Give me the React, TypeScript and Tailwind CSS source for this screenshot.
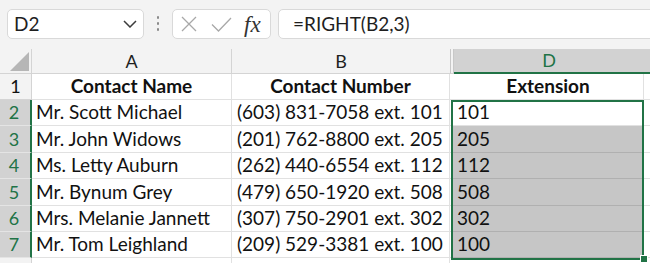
import React from "react";

const rows = [
  { n: 2, name: "Mr. Scott Michael", phone: "(603) 831-7058 ext. 101", ext: "101", h: "h-[26px]" },
  { n: 3, name: "Mr. John Widows", phone: "(201) 762-8800 ext. 205", ext: "205", h: "h-[27px]" },
  { n: 4, name: "Ms. Letty Auburn", phone: "(262) 440-6554 ext. 112", ext: "112", h: "h-[26px]" },
  { n: 5, name: "Mr. Bynum Grey", phone: "(479) 650-1920 ext. 508", ext: "508", h: "h-[27px]" },
  { n: 6, name: "Mrs. Melanie Jannett", phone: "(307) 750-2901 ext. 302", ext: "302", h: "h-[26px]" },
  { n: 7, name: "Mr. Tom Leighland", phone: "(209) 529-3381 ext. 100", ext: "100", h: "h-[26px]" },
];

const FormulaBar = () => (
  <div className="flex h-[49px] pt-[9px] pl-[7px]">
    <div className="flex h-[30px] w-[137px] items-center justify-between rounded-[5px] border border-[#d9d9d9] bg-white pl-[6px] pr-[6px]">
      <span className="text-[19px] text-[#1f1f1f]">D2</span>
      <svg width="14" height="8" viewBox="0 0 14 8" fill="none">
        <path d="M1 1l6 6 6-6" stroke="#3c3c3c" strokeWidth="1.5" />
      </svg>
    </div>
    <div className="flex w-[28px] flex-col items-center gap-[3.5px] pt-[7px]">
      <span className="h-[2.5px] w-[2.5px] rounded-full bg-[#8a8a8a]" />
      <span className="h-[2.5px] w-[2.5px] rounded-full bg-[#8a8a8a]" />
      <span className="h-[2.5px] w-[2.5px] rounded-full bg-[#8a8a8a]" />
    </div>
    <div className="flex h-[30px] w-[99px] items-center rounded-[5px] border border-[#d9d9d9] bg-white pl-[8px]">
      <svg width="16" height="16" viewBox="0 0 16 16" fill="none">
        <path d="M1 1l14 14M15 1L1 15" stroke="#a8a8a8" strokeWidth="1.3" />
      </svg>
      <svg className="ml-[14px]" width="21" height="15" viewBox="0 0 21 15" fill="none">
        <path d="M1 7.5l6.5 6.5L20 1" stroke="#a8a8a8" strokeWidth="1.3" />
      </svg>
      <span className="ml-[12px] font-['Liberation_Serif',serif] text-[23px] italic leading-none text-[#333]">
        fx
      </span>
    </div>
    <div className="-mr-[12px] ml-[7px] flex h-[30px] flex-1 items-center rounded-[5px] border border-[#d9d9d9] bg-white pl-[14px]">
      <span className="text-[19px] text-[#1f1f1f]">=RIGHT(B2,3)</span>
    </div>
  </div>
);

const HeaderRow = () => (
  <div className="flex h-[25px] text-[18px] text-[#1f1f1f]">
    <div className="relative w-[32px] border-r border-b border-[#d4d4d4] bg-[#f3f3f3]">
      <svg className="absolute left-[10px] top-[3px]" width="19" height="19" viewBox="0 0 19 19">
        <path d="M19 0V19H0Z" fill="#b6b6b6" />
      </svg>
    </div>
    <div className="flex w-[200px] items-center justify-center border-r border-b border-[#d4d4d4] bg-[#f3f3f3]">A</div>
    <div className="flex w-[218px] items-center justify-center border-b border-[#d4d4d4] bg-[#f3f3f3]">B</div>
    <div className="w-[4px] border-x border-b border-[#c8c8c8] border-b-[#d4d4d4] bg-[#f3f3f3]" />
    <div className="flex flex-1 items-center justify-center border-b-2 border-[#217346] bg-[#d2d2d2] pr-[6px] text-[#217346]">
      D
    </div>
  </div>
);

export default function App() {
  return (
    <div className="h-[263px] w-[650px] overflow-hidden bg-[#f3f3f3] font-['Lato',sans-serif]">
      <FormulaBar />
      <div className="relative">
        <HeaderRow />
        <div className="flex h-[26px] text-[19px] text-[#111]">
          <div className="flex w-[32px] items-center justify-center border-r border-b border-[#d4d4d4] bg-[#f3f3f3] text-[18px]">
            1
          </div>
          <div className="flex w-[200px] items-center justify-center border-r border-b border-[#e1e1e1] bg-white font-bold">
            Contact Name
          </div>
          <div className="flex w-[218px] items-center justify-center border-r border-b border-[#e1e1e1] bg-white font-bold">
            Contact Number
          </div>
          <div className="w-[3px] border-b border-[#e1e1e1] bg-white" />
          <div className="flex w-[191px] items-center justify-center border-r border-b border-[#e1e1e1] bg-white font-bold">
            Extension
          </div>
          <div className="flex-1 border-b border-[#e1e1e1] bg-white" />
        </div>
        {rows.map((r, i) => (
          <div key={r.n} className={`flex ${r.h} text-[19px] text-[#111]`}>
            <div className="flex w-[32px] items-center justify-center border-r-2 border-b border-r-[#217346] border-b-[#e4e4e4] bg-[#d2d2d2] pr-[2px] text-[18px] text-[#217346]">
              {r.n}
            </div>
            <div className="flex w-[200px] items-center border-r border-b border-[#e1e1e1] bg-white pl-[4px]">
              {r.name}
            </div>
            <div className="flex w-[218px] items-center border-r border-b border-[#e1e1e1] bg-white pl-[5px]">
              {r.phone}
            </div>
            <div className="w-[3px] border-b border-[#e1e1e1] bg-white" />
            <div
              className={`flex w-[191px] items-center border-r border-b pl-[4px] ${
                i === 0 ? "border-[#e1e1e1] bg-white" : "border-[#b0b0b0] bg-[#c6c6c6]"
              }`}
            >
              {r.ext}
            </div>
            <div className="flex-1 border-b border-[#e1e1e1] bg-white" />
          </div>
        ))}
        <div className="flex h-[10px]">
          <div className="w-[32px] border-r border-[#d4d4d4] bg-[#f3f3f3]" />
          <div className="w-[200px] border-r border-[#e1e1e1] bg-white" />
          <div className="w-[218px] border-r border-[#e1e1e1] bg-white" />
          <div className="w-[3px] bg-white" />
          <div className="w-[191px] border-r border-[#e1e1e1] bg-white" />
          <div className="flex-1 bg-white" />
        </div>
        {/* selection outline D2:D7 */}
        <div className="pointer-events-none absolute left-[451px] top-[51px] h-[160px] w-[193px] border-2 border-[#217346]" />
        <div className="pointer-events-none absolute left-[640px] top-[206px] h-[8px] w-[8px] border border-white bg-[#217346]" />
      </div>
    </div>
  );
}
